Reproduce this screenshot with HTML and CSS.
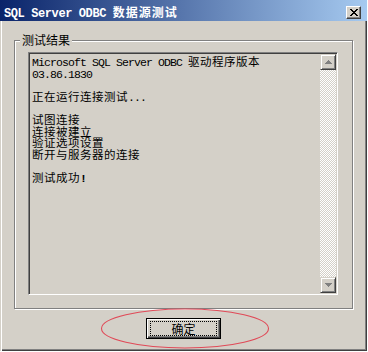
FILE: index.html
```html
<!DOCTYPE html>
<html lang="zh-CN">
<head>
  <meta charset="UTF-8" />
  <title>SQL Server ODBC 数据源测试</title>
  <link rel="stylesheet" href="styles.css">
</head>
<body>
  <div class="window">
    <div class="titlebar">
      <span class="title"><span class="en">SQL Server ODBC </span>数据源测试</span>
      <button class="close" type="button" aria-label="关闭">
        <svg width="8" height="7" viewBox="0 0 8 7" shape-rendering="crispEdges">
          <path d="M0 0h2v1H0zM6 0h2v1H6zM1 1h2v1H1zM5 1h2v1H5zM2 2h4v1H2zM3 3h2v1H3zM2 4h4v1H2zM1 5h2v1H1zM5 5h2v1H5zM0 6h2v1H0zM6 6h2v1H6z" fill="#000"/>
        </svg>
      </button>
    </div>

    <div class="content">
      <fieldset class="group">
        <legend>测试结果</legend>
        <div class="edit">
          <div class="log">
            <div class="ln"><span class="en">Microsoft SQL Server ODBC </span>驱动程序版本</div>
            <div class="ln"><span class="en">03.86.1830</span></div>
            <div class="ln"></div>
            <div class="ln">正在运行连接测试<span class="en">...</span></div>
            <div class="ln"></div>
            <div class="ln">试图连接</div>
            <div class="ln">连接被建立</div>
            <div class="ln">验证选项设置</div>
            <div class="ln">断开与服务器的连接</div>
            <div class="ln"></div>
            <div class="ln">测试成功<span class="en bang">!</span></div>
          </div>
          <div class="scroll">
            <div class="sb-btn">
              <svg width="7" height="4" viewBox="0 0 7 4" shape-rendering="crispEdges">
                <path d="M3 0h1v1H3zM2 1h3v1H2zM1 2h5v1H1zM0 3h7v1H0z" fill="#808080"/>
              </svg>
            </div>
            <div class="track"></div>
            <div class="sb-btn">
              <svg width="7" height="4" viewBox="0 0 7 4" shape-rendering="crispEdges">
                <path d="M0 0h7v1H0zM1 1h5v1H1zM2 2h3v1H2zM3 3h1v1H3z" fill="#808080"/>
              </svg>
            </div>
          </div>
        </div>
      </fieldset>

      <div class="actions">
        <button class="ok" type="button"><span class="focus">确定</span></button>
      </div>
    </div>

    <!-- red annotation ring around the OK button -->
    <svg class="mark" width="170" height="42" viewBox="0 0 170 42">
      <ellipse cx="85" cy="20.5" rx="83.5" ry="19.5" fill="none" stroke="#e04a58" stroke-width="1.1"/>
    </svg>
  </div>
</body>
</html>
```

FILE: styles.css
```css
/* Reset */
* { margin: 0; padding: 0; box-sizing: border-box; }

html, body {
  background: #fff;
  font-family: "Noto Sans CJK SC", sans-serif;
  font-size: 12px;
  color: #000;
}

.en {
  font-family: "Liberation Mono", "Noto Sans CJK SC", monospace;
}

/* Dialog frame */
.window {
  position: relative;
  width: 367px;
  height: 351px;
  background: #d4d0c8;
  display: flex;
  flex-direction: column;
}

.titlebar {
  flex: none;
  height: 21px;
  display: flex;
  align-items: flex-start;
  justify-content: space-between;
  padding: 6px 6px 0 4px;
  background: linear-gradient(to right, #0a246a, #a6caf0);
  color: #fff;
}
.title {
  font-weight: bold;
  font-size: 12px;
  line-height: 12px;
  letter-spacing: 1px;
  white-space: nowrap;
}
.title .en { letter-spacing: -0.4px; }

.close {
  width: 15px;
  height: 13px;
  display: flex;
  align-items: center;
  justify-content: center;
  background: #d4d0c8;
  border: 1px solid;
  border-color: #fff #404040 #404040 #fff;
  box-shadow: inset -1px -1px #808080;
}

.content {
  flex: 1;
  display: flex;
  flex-direction: column;
  padding: 13px 14px 0 14px;
  box-shadow:
    inset 1px 0 #d4d0c8,
    inset 2px 0 #fff,
    inset -1px -1px #404040,
    inset -2px -2px #808080;
}

/* Group box */
.group {
  padding: 6px 14px 13px 13px;
  border: 1px solid #808080;
  box-shadow: inset 1px 1px #fff, 1px 1px #fff;
}
.group legend {
  margin-left: -8px;
  padding: 0 2px;
  font-size: 12px;
  line-height: 12px;
  background: #d4d0c8;
}

/* Read-only multiline edit */
.edit {
  height: 243px;
  display: flex;
  padding: 1px;
  border: 1px solid;
  border-color: #808080 #fff #fff #808080;
  box-shadow: inset 1px 1px #404040, inset -1px -1px #d4d0c8;
}
.log {
  flex: 1;
  padding: 2px 0 0 2px;
  overflow: hidden;
  font-size: 11.5px;
  letter-spacing: 0.5px;
}
.ln {
  height: 11.6px;
  line-height: 11.5px;
  white-space: nowrap;
}
.log .en { letter-spacing: -0.9px; }
.log .bang { font-weight: bold; }

.scroll {
  flex: none;
  width: 16px;
  display: flex;
  flex-direction: column;
}
.sb-btn {
  flex: none;
  height: 16px;
  display: flex;
  align-items: center;
  justify-content: center;
  background: #d4d0c8;
  border: 1px solid;
  border-color: #d4d0c8 #404040 #404040 #d4d0c8;
  box-shadow: inset 1px 1px #fff, inset -1px -1px #808080;
}
.track {
  flex: 1;
  background: repeating-conic-gradient(#d4d0c8 0 25%, #fff 0 50%) 0 0 / 2px 2px;
}

/* Buttons row */
.actions {
  display: flex;
  justify-content: center;
  padding-top: 9px;
}
.ok {
  width: 75px;
  height: 21px;
  display: flex;
  align-items: center;
  justify-content: center;
  background: #d4d0c8;
  border: 1px solid #000;
  box-shadow: inset 1px 1px #fff, inset -1px -1px #404040, inset -2px -2px #808080;
  font-family: "Noto Sans CJK SC", sans-serif;
  font-size: 12px;
  color: #000;
}
.focus {
  width: 67px;
  height: 15px;
  display: flex;
  align-items: center;
  justify-content: center;
  line-height: 12px;
  border: 1px dotted #000;
}

.mark {
  position: absolute;
  left: 100px;
  top: 308px;
  pointer-events: none;
}
```
